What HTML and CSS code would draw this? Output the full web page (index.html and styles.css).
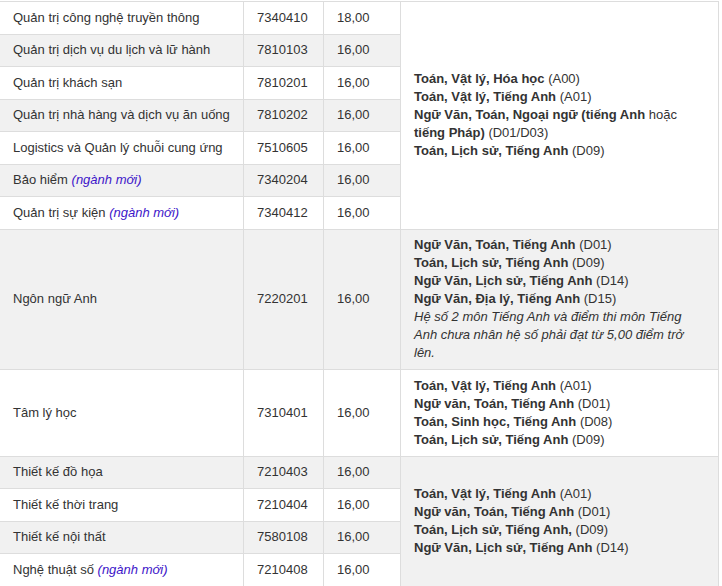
FILE: index.html
```html
<!DOCTYPE html>
<html lang="vi">
<head>
<meta charset="utf-8">
<link rel="stylesheet" href="styles.css">
</head>
<body>
<table class="tbl">
  <colgroup>
    <col class="c1"><col class="c2"><col class="c3"><col class="c4">
  </colgroup>
  <tbody>
    <tr>
      <td>Quản trị công nghệ truyền thông</td><td>7340410</td><td>18,00</td>
      <td rowspan="7"><b>Toán, Vật lý, Hóa học</b> (A00)<br><b>Toán, Vật lý, Tiếng Anh</b> (A01)<br><b>Ngữ Văn, Toán, Ngoại ngữ (tiếng Anh</b> hoặc <b>tiếng Pháp)</b> (D01/D03)<br><b>Toán, Lịch sử, Tiếng Anh</b> (D09)</td>
    </tr>
    <tr><td>Quản trị dịch vụ du lịch và lữ hành</td><td>7810103</td><td>16,00</td></tr>
    <tr><td>Quản trị khách sạn</td><td>7810201</td><td>16,00</td></tr>
    <tr><td>Quản trị nhà hàng và dịch vụ ăn uống</td><td>7810202</td><td>16,00</td></tr>
    <tr><td>Logistics và Quản lý chuỗi cung ứng</td><td>7510605</td><td>16,00</td></tr>
    <tr><td>Bảo hiểm <i class="new">(ngành mới)</i></td><td>7340204</td><td>16,00</td></tr>
    <tr><td>Quản trị sự kiện <i class="new">(ngành mới)</i></td><td>7340412</td><td>16,00</td></tr>
    <tr>
      <td>Ngôn ngữ Anh</td><td>7220201</td><td>16,00</td>
      <td><b>Ngữ Văn, Toán, Tiếng Anh</b> (D01)<br><b>Toán, Lịch sử, Tiếng Anh</b> (D09)<br><b>Ngữ Văn, Lịch sử, Tiếng Anh</b> (D14)<br><b>Ngữ Văn, Địa lý, Tiếng Anh</b> (D15)<br><i>Hệ số 2 môn Tiếng Anh và điểm thi môn Tiếng Anh chưa nhân hệ số phải đạt từ 5,00 điểm trở lên.</i></td>
    </tr>
    <tr>
      <td>Tâm lý học</td><td>7310401</td><td>16,00</td>
      <td><b>Toán, Vật lý, Tiếng Anh</b> (A01)<br><b>Ngữ văn, Toán, Tiếng Anh</b> (D01)<br><b>Toán, Sinh học, Tiếng Anh</b> (D08)<br><b>Toán, Lịch sử, Tiếng Anh</b> (D09)</td>
    </tr>
    <tr>
      <td>Thiết kế đồ họa</td><td>7210403</td><td>16,00</td>
      <td rowspan="4"><b>Toán, Vật lý, Tiếng Anh</b> (A01)<br><b>Ngữ văn, Toán, Tiếng Anh</b> (D01)<br><b>Toán, Lịch sử, Tiếng Anh,</b> (D09)<br><b>Ngữ Văn, Lịch sử, Tiếng Anh</b> (D14)</td>
    </tr>
    <tr><td>Thiết kế thời trang</td><td>7210404</td><td>16,00</td></tr>
    <tr><td>Thiết kế nội thất</td><td>7580108</td><td>16,00</td></tr>
    <tr><td>Nghệ thuật số <i class="new">(ngành mới)</i></td><td>7210408</td><td>16,00</td></tr>
  </tbody>
</table>
</body>
</html>
```

FILE: styles.css
```css
html, body {
  margin: 0;
  padding: 0;
  background: #fff;
}
body {
  font-family: "Liberation Sans", Arial, sans-serif;
  font-size: 13px;
  color: #333;
  padding-top: 1px;
}
.tbl {
  border-collapse: collapse;
  table-layout: fixed;
  width: 719px;
  margin-left: -1px;
}
.c1 { width: 244px; }
.c2 { width: 80px; }
.c3 { width: 77px; }
.c4 { width: 318px; }
.tbl td {
  border: 1px solid #ddd;
  padding: 6.75px 13px;
  line-height: 18px;
  vertical-align: middle;
}
.tbl tr:nth-child(even) td {
  background: #f1f1f1;
}
.tbl b {
  font-weight: bold;
}
.new {
  color: #3d16c9;
}
```
